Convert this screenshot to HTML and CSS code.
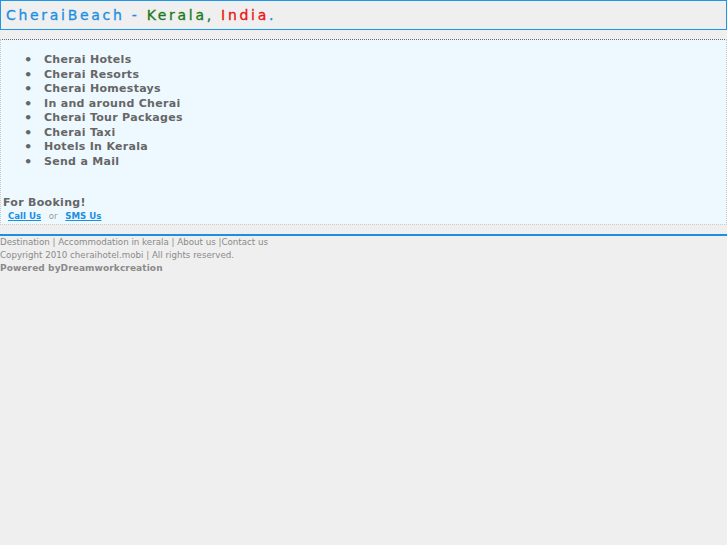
FILE: index.html
```html
<!DOCTYPE html>
<html>
<head>
<meta charset="utf-8">
<title>CheraiBeach - Kerala, India.</title>
<link rel="stylesheet" href="styles.css">
</head>
<body>
<div class="header">
  <h1 class="title"><span class="blue">CheraiBeach -</span> <span class="green">Kerala,</span> <span class="red">India</span><span class="blue">.</span></h1>
</div>
<div class="content">
  <ul class="menu">
    <li><a href="#">Cherai Hotels</a></li>
    <li><a href="#">Cherai Resorts</a></li>
    <li><a href="#">Cherai Homestays</a></li>
    <li><a href="#">In and around Cherai</a></li>
    <li><a href="#">Cherai Tour Packages</a></li>
    <li><a href="#">Cherai Taxi</a></li>
    <li><a href="#">Hotels In Kerala</a></li>
    <li><a href="#">Send a Mail</a></li>
  </ul>
  <div class="booking">
    <div class="booking-title">For Booking!</div>
    <div class="booking-links"><a href="#">Call Us</a> <span class="or">or</span> <a href="#">SMS Us</a></div>
  </div>
</div>
<div class="footer">
  <div class="footer-links">Destination | Accommodation in kerala | About us |Contact us</div>
  <div class="copy">Copyright 2010 cheraihotel.mobi | All rights reserved.</div>
  <div class="powered">Powered byDreamworkcreation</div>
</div>
</body>
</html>
```
FILE: styles.css
```css
html, body {
  margin: 0;
  padding: 0;
  background: #efefef;
  font-family: "DejaVu Sans", Verdana, sans-serif;
}
.header {
  border: 1px solid #1e96e8;
  display: flex;
  align-items: center;
  padding: 0 5px 1px;
  box-sizing: border-box;
  height: 30px;
}
.title {
  margin: 0;
  font-size: 14px;
  font-weight: normal;
  letter-spacing: 2.7px;
  -webkit-text-stroke: 0.3px currentColor;
}
.blue { color: #1a8fe3; }
.green { color: #1a7a1a; }
.red { color: #ee1111; }
.content {
  margin-top: 9px;
  background: #eef9ff;
  border: 1px dotted #c8c8c8;
  border-top: 1px dotted #666;
  padding: 13px 0 2px 2px;
}
.menu {
  margin: 0;
  padding-left: 41px;
  list-style: none;
  color: #666;
}
.menu li {
  font-size: 11px;
  font-weight: bold;
  line-height: 14.5px;
  height: 14.5px;
  letter-spacing: 0.3px;
}
.menu li::before {
  content: "•";
  display: inline-block;
  vertical-align: top;
  width: 20px;
  margin-left: -20px;
  font-size: 13px;
  line-height: 14.5px;
  height: 14.5px;
}
.menu a {
  color: #666;
  text-decoration: none;
}
.booking {
  margin-top: 26px;
}
.booking-title {
  font-size: 11px;
  font-weight: bold;
  color: #666;
  line-height: 15px;
  letter-spacing: 0.3px;
}
.booking-links {
  font-size: 8.6px;
  line-height: 12px;
  padding-left: 5px;
}
.booking-links a {
  color: #1a8fe3;
  font-weight: bold;
}
.or {
  color: #999;
  margin: 0 5px;
}
.footer {
  margin-top: 9px;
  border-top: 2px solid #1a8fe3;
  box-shadow: 0 1px 0 #dde;
  padding-top: 0;
  font-size: 8.7px;
  color: #8a8a8a;
  line-height: 13px;
}
.powered {
  font-weight: bold;
  font-size: 9px;
  letter-spacing: 0.1px;
}
```
